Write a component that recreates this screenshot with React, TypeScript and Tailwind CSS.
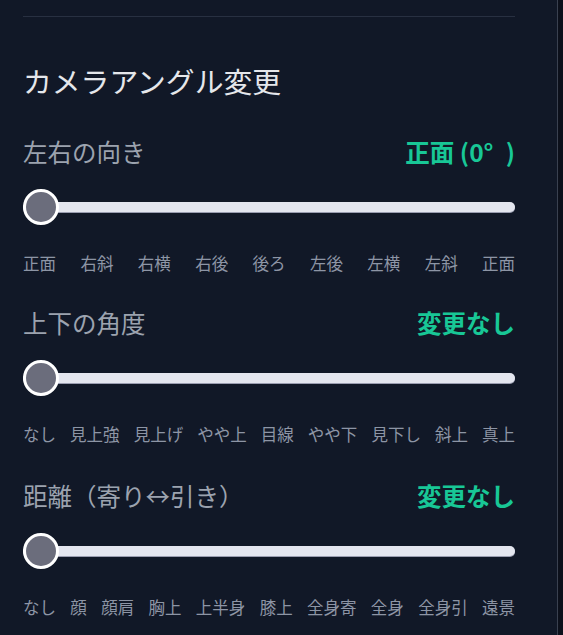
const angleSections = [
  {
    label: "左右の向き",
    value: "正面 (0°\u2002)",
    ticks: ["正面", "右斜", "右横", "右後", "後ろ", "左後", "左横", "左斜", "正面"],
    gapTop: "mt-[37px]",
  },
  {
    label: "上下の角度",
    value: "変更なし",
    ticks: ["なし", "見上強", "見上げ", "やや上", "目線", "やや下", "見下し", "斜上", "真上"],
    gapTop: "mt-[32px]",
  },
  {
    label: "距離（寄り↔引き）",
    value: "変更なし",
    ticks: ["なし", "顔", "顔肩", "胸上", "上半身", "膝上", "全身寄", "全身", "全身引", "遠景"],
    gapTop: "mt-[34px]",
  },
];

function Slider() {
  return (
    <div className="relative mt-[21px] h-9 flex items-center">
      <div className="h-[10px] w-full rounded-full bg-[#e4e6ef] shadow-[0_1px_0_#9a9db0]" />
      <div className="absolute left-0 top-0 size-9 rounded-full border-[3px] border-white bg-[#6b6d7c]" />
    </div>
  );
}

function AngleSection({ label, value, ticks, gapTop }: (typeof angleSections)[number]) {
  return (
    <div className={gapTop}>
      <div className="flex items-center justify-between h-8">
        <span className="text-[24.5px] text-[#9ca3af]">{label}</span>
        <span className="text-[24.5px] font-bold text-[#18c796]">{value}</span>
      </div>
      <Slider />
      <div className="mt-[26px] flex justify-between h-6 items-center">
        {ticks.map((t, i) => (
          <span key={i} className="text-[16.5px] text-[#8d95a5]">
            {t}
          </span>
        ))}
      </div>
    </div>
  );
}

export default function App() {
  return (
    <div
      className="flex h-[635px] w-[563px] bg-[#0c101b] overflow-hidden"
      style={{ fontFamily: '"Noto Sans CJK JP", "Noto Sans", sans-serif' }}
    >
      <div className="w-[558px] bg-[#111827] border-r border-[#3a4150] pl-[23px]">
        <div className="w-[492px]">
          <div className="h-4" />
          <div className="border-t border-[#283041]" />
          <h2 className="mt-[46px] h-9 flex items-center text-[28.8px] text-[#e5e7eb]">
            カメラアングル変更
          </h2>
          {angleSections.map((s) => (
            <AngleSection key={s.label} {...s} />
          ))}
        </div>
      </div>
    </div>
  );
}
